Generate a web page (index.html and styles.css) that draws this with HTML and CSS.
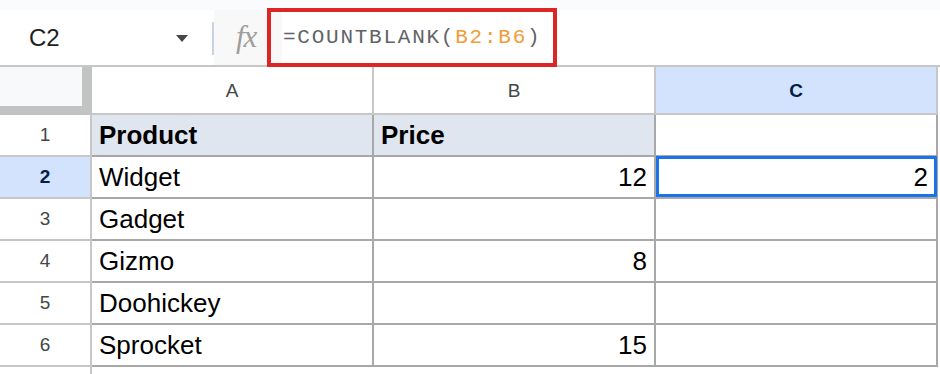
FILE: index.html
```html
<!DOCTYPE html>
<html>
<head>
<meta charset="utf-8">
<link rel="stylesheet" href="styles.css">
</head>
<body>
<div class="app">
  <div class="topstrip"></div>
  <div class="toolbar">
    <div class="namebox"><span class="ref">C2</span><span class="caret"></span></div>
    <div class="sep"></div>
    <div class="fx">fx</div>
    <div class="formula"><span class="fn">=COUNTBLANK(</span><span class="rng">B2:B6</span><span class="fn">)</span></div>
    <div class="highlight"></div>
  </div>
  <div class="grid">
    <div class="corner"></div>
    <div class="colhead">A</div>
    <div class="colhead">B</div>
    <div class="colhead active">C</div>

    <div class="rowhead">1</div>
    <div class="cell hdr">Product</div>
    <div class="cell hdr">Price</div>
    <div class="cell"></div>

    <div class="rowhead active">2</div>
    <div class="cell">Widget</div>
    <div class="cell num">12</div>
    <div class="cell num sel">2</div>

    <div class="rowhead">3</div>
    <div class="cell">Gadget</div>
    <div class="cell"></div>
    <div class="cell"></div>

    <div class="rowhead">4</div>
    <div class="cell">Gizmo</div>
    <div class="cell num">8</div>
    <div class="cell"></div>

    <div class="rowhead">5</div>
    <div class="cell">Doohickey</div>
    <div class="cell"></div>
    <div class="cell"></div>

    <div class="rowhead">6</div>
    <div class="cell">Sprocket</div>
    <div class="cell num">15</div>
    <div class="cell"></div>

    <div class="rowhead tail"></div>
    <div class="blank"></div>
    <div class="blank"></div>
    <div class="blank"></div>
  </div>
</div>
</body>
</html>
```

FILE: styles.css
```css
*, *::before, *::after { box-sizing: border-box; }
html, body { margin: 0; padding: 0; background: #ffffff; }
body { font-family: "Liberation Sans", Arial, sans-serif; color: #000; }

.app { width: 940px; height: 374px; overflow: hidden; }

.topstrip { height: 10px; background: #f9fbfd; }

.toolbar {
  position: relative;
  display: flex;
  height: 57px;
  border-bottom: 2px solid #c4c7c5;
  background: #ffffff;
}

.namebox {
  width: 212px;
  display: flex;
  align-items: center;
  padding-left: 29px;
  padding-right: 24px;
  background: #ffffff;
}
.ref { font-size: 24px; color: #1f1f1f; }
.caret {
  margin-left: auto;
  width: 0; height: 0;
  border-left: 6.5px solid transparent;
  border-right: 6.5px solid transparent;
  border-top: 7px solid #444746;
  margin-top: 1px;
}

.sep {
  width: 2px;
  height: 33px;
  align-self: center;
  margin-top: 2px;
  background: #c8d4e4;
}

.fx {
  width: 68px;
  background: #f8f8f8;
  display: flex;
  align-items: center;
  padding-left: 22px;
  font-family: "Liberation Serif", "Times New Roman", serif;
  font-style: italic;
  font-size: 31px;
  color: #9e9e9e;
  letter-spacing: -1px;
  padding-bottom: 2px;
}

.formula {
  flex: 1;
  display: flex;
  align-items: center;
  padding-left: 1px;
  font-family: "Liberation Mono", "DejaVu Sans Mono", monospace;
  font-size: 21px;
  letter-spacing: 1.75px;
  background: #ffffff;
}
.fn { color: #5f6368; }
.rng { color: #f29d38; }

.highlight {
  position: absolute;
  left: 267px;
  top: -2px;
  width: 290px;
  height: 59px;
  border: 4px solid #dc2626;
  pointer-events: none;
}

.grid {
  display: grid;
  grid-template-columns: 92px 282px 282px 282px;
  grid-template-rows: 48px repeat(6, 42px) 7px;
}

.corner {
  background: #f8f9fa;
  border-right: 10px solid #c2c4c3;
  border-bottom: 9px solid #c2c4c3;
}

.colhead {
  display: flex;
  align-items: center;
  justify-content: center;
  font-size: 19px;
  color: #444746;
  background: #ffffff;
  border-right: 2px solid #c7c7c7;
  border-bottom: 2px solid #c7c7c7;
  padding-top: 1px;
}
.colhead.active {
  background: #d3e3fd;
  color: #041e49;
  font-weight: bold;
}

.rowhead {
  display: flex;
  align-items: center;
  justify-content: center;
  font-size: 19px;
  color: #444746;
  background: #ffffff;
  border-right: 2px solid #c7c7c7;
  border-bottom: 2px solid #c7c7c7;
}
.rowhead.active {
  background: #d3e3fd;
  color: #041e49;
  font-weight: bold;
}
.rowhead.tail { border-bottom: none; }

.cell {
  display: flex;
  align-items: center;
  padding: 1px 7px 0 7px;
  font-size: 26px;
  color: #000;
  background: #ffffff;
  border-right: 2px solid #a8a8a8;
  border-bottom: 2px solid #a8a8a8;
}
.cell.hdr { background: #dfe6ef; font-weight: bold; }
.cell.num { justify-content: flex-end; }

.sel { position: relative; padding-right: 8px; }
.sel::after {
  content: "";
  position: absolute;
  left: 0;
  top: -1px;
  width: 281px;
  height: 41px;
  border: 3px solid #1a73e8;
}

.blank { background: #ffffff; }
```
